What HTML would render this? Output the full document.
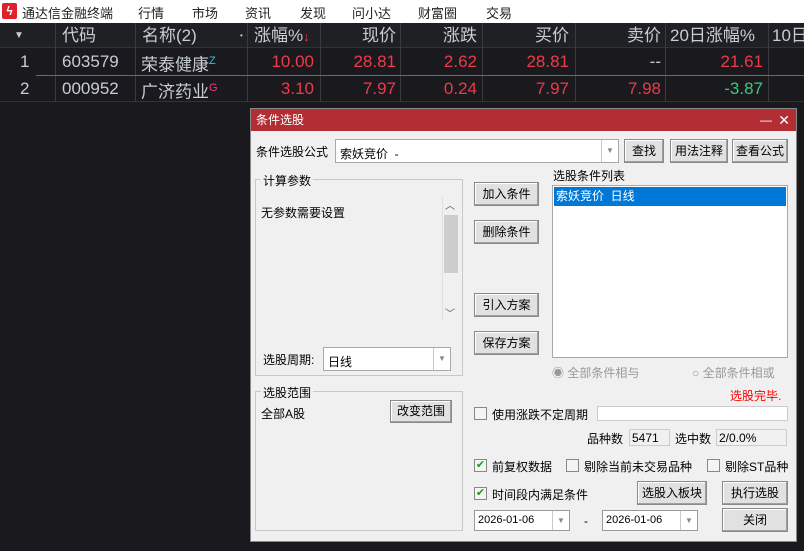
<!DOCTYPE html>
<html><head><meta charset="utf-8"><style>
*{margin:0;padding:0;box-sizing:border-box}
body{width:804px;height:551px;background:#1a1a1e;overflow:hidden;position:relative;font-family:"Liberation Sans","Noto Sans CJK SC",sans-serif}
.a{position:absolute;white-space:nowrap}
.menu{left:0;top:0;width:804px;height:23px;background:#fff;font-size:13px;color:#222}
.hdr{left:0;top:23px;width:804px;height:25px;background:#1f2024;border-bottom:1px solid #333}
.t{font-size:17px;color:#c8ccd4;line-height:25px}
.r{color:#f0384a}
.vl{position:absolute;width:1px;background:#3a3b40;top:23px;height:78px}
.dlg{left:250px;top:108px;width:547px;height:434px;background:#f0f0f0;border:1px solid #888}
.tb{left:0;top:0;width:545px;height:22px;background:#b32d34;color:#fff;font-size:12px;line-height:22px;padding-left:5px}
.d{font-size:12px;color:#000}
.btn{position:absolute;background:#e1e1e1;border:1px solid #8a8a8a;box-shadow:inset -1px -1px #a0a0a0,inset 1px 1px #fff;font-size:12px;text-align:center;color:#000}
.box{position:absolute;background:#fff;border:1px solid #a8a8a8}
.grp{position:absolute;border:1px solid #c8c8c8}
.gl{position:absolute;top:-8px;left:5px;background:#f0f0f0;padding:0 2px;font-size:12px}
.cb{position:absolute;width:13px;height:13px;border:1px solid #888;background:#f4f4f4;font-size:11px;color:#1a9a1a;line-height:11px;text-align:center}
.dd{position:absolute;right:0;top:0;bottom:0;width:17px;border-left:1px solid #c8c8c8;color:#888;font-size:8px;text-align:center}
</style></head><body>
<div class="a menu">
<div class="a" style="left:2px;top:3px;width:15px;height:16px;background:#e0202a;border-radius:2px;color:#fff;font-size:12px;line-height:16px;text-align:center;font-weight:bold">ϟ</div>
<div class="a" style="left:22px;top:3px">通达信金融终端</div>
<div class="a" style="left:138px;top:3px">行情</div>
<div class="a" style="left:192px;top:3px">市场</div>
<div class="a" style="left:245px;top:3px">资讯</div>
<div class="a" style="left:300px;top:3px">发现</div>
<div class="a" style="left:352px;top:3px">问小达</div>
<div class="a" style="left:418px;top:3px">财富圈</div>
<div class="a" style="left:486px;top:3px">交易</div>
</div>
<div class="a hdr"></div>
<div class="vl" style="left:55px"></div><div class="vl" style="left:135px"></div><div class="vl" style="left:247px"></div><div class="vl" style="left:320px"></div><div class="vl" style="left:400px"></div><div class="vl" style="left:482px"></div><div class="vl" style="left:575px"></div><div class="vl" style="left:665px"></div><div class="vl" style="left:768px"></div>
<div class="a t" style="left:14px;top:23px;font-size:10px">▼</div>
<div class="a t" style="left:62px;top:23px">代码</div>
<div class="a t" style="left:142px;top:23px">名称(2)</div>
<div class="a t" style="left:240px;top:23px;font-size:8px">•</div>
<div class="a t" style="left:254px;top:23px">涨幅%<span class="r" style="font-size:13px">↓</span></div>
<div class="a t" style="left:320px;top:23px;width:76px;text-align:right">现价</div>
<div class="a t" style="left:400px;top:23px;width:77px;text-align:right">涨跌</div>
<div class="a t" style="left:482px;top:23px;width:87px;text-align:right">买价</div>
<div class="a t" style="left:575px;top:23px;width:86px;text-align:right">卖价</div>
<div class="a t" style="left:670px;top:23px">20日涨幅%</div>
<div class="a t" style="left:772px;top:23px">10日</div>
<div class="a" style="left:36px;top:75px;width:768px;height:1px;background:#4a6ad8"></div>
<div class="a" style="left:0;top:101px;width:804px;height:1px;background:#333"></div>
<div class="a t" style="left:20px;top:49px">1</div>
<div class="a t" style="left:62px;top:49px">603579</div>
<div class="a t" style="left:141px;top:49px">荣泰健康<sup style="color:#20d0e0;font-size:11px">Z</sup></div>
<div class="a t r" style="left:247px;top:49px;width:67px;text-align:right">10.00</div>
<div class="a t r" style="left:320px;top:49px;width:76px;text-align:right">28.81</div>
<div class="a t r" style="left:400px;top:49px;width:77px;text-align:right">2.62</div>
<div class="a t r" style="left:482px;top:49px;width:87px;text-align:right">28.81</div>
<div class="a t" style="left:575px;top:49px;width:86px;text-align:right">--</div>
<div class="a t r" style="left:665px;top:49px;width:98px;text-align:right">21.61</div>
<div class="a t" style="left:20px;top:76px">2</div>
<div class="a t" style="left:62px;top:76px">000952</div>
<div class="a t" style="left:141px;top:76px">广济药业<sup style="color:#ff3090;font-size:11px">G</sup></div>
<div class="a t r" style="left:247px;top:76px;width:67px;text-align:right">3.10</div>
<div class="a t r" style="left:320px;top:76px;width:76px;text-align:right">7.97</div>
<div class="a t r" style="left:400px;top:76px;width:77px;text-align:right">0.24</div>
<div class="a t r" style="left:482px;top:76px;width:87px;text-align:right">7.97</div>
<div class="a t r" style="left:575px;top:76px;width:86px;text-align:right">7.98</div>
<div class="a t" style="left:665px;top:76px;width:98px;text-align:right;color:#3cc87a">-3.87</div>

<div class="a dlg">
<div class="a tb">条件选股<span style="position:absolute;right:24px;top:0">—</span><span style="position:absolute;right:6px;top:0;font-size:14px">✕</span></div>
<div class="a d" style="left:5px;top:34px">条件选股公式</div>
<div class="box" style="left:84px;top:30px;width:284px;height:24px"><span class="a d" style="left:4px;top:5px">索妖竞价&nbsp; -</span><div class="dd" style="line-height:22px">▼</div></div>
<div class="btn" style="left:373px;top:30px;width:40px;height:24px;line-height:22px">查找</div>
<div class="btn" style="left:419px;top:30px;width:58px;height:24px;line-height:22px">用法注释</div>
<div class="btn" style="left:481px;top:30px;width:56px;height:24px;line-height:22px">查看公式</div>

<div class="grp" style="left:4px;top:70px;width:208px;height:197px"><div class="gl">计算参数</div>
<div class="a d" style="left:5px;top:24px">无参数需要设置</div>
<div class="a" style="left:186px;top:17px;width:16px;height:123px;background:#f0f0f0;border-left:1px solid #e0e0e0">
<div class="a" style="left:2px;top:0;font-size:10px;color:#555">︿</div>
<div class="a" style="left:1px;top:18px;width:14px;height:58px;background:#cdcdcd"></div>
<div class="a" style="left:2px;top:108px;font-size:10px;color:#555">﹀</div></div>
<div class="a d" style="left:7px;top:171px">选股周期:</div>
<div class="box" style="left:67px;top:167px;width:128px;height:24px"><span class="a d" style="left:4px;top:5px">日线</span><div class="dd" style="line-height:22px">▼</div></div>
</div>

<div class="btn" style="left:223px;top:73px;width:65px;height:24px;line-height:22px">加入条件</div>
<div class="btn" style="left:223px;top:111px;width:65px;height:24px;line-height:22px">删除条件</div>
<div class="btn" style="left:223px;top:184px;width:65px;height:24px;line-height:22px">引入方案</div>
<div class="btn" style="left:223px;top:222px;width:65px;height:24px;line-height:22px">保存方案</div>

<div class="a d" style="left:302px;top:58px">选股条件列表</div>
<div class="box" style="left:301px;top:76px;width:236px;height:173px"><div class="a" style="left:1px;top:1px;width:232px;height:19px;background:#0078d7;color:#fff;font-size:12px;line-height:19px;padding-left:2px">索妖竞价&nbsp; 日线</div></div>
<div class="a d" style="left:301px;top:255px;color:#999">◉ 全部条件相与</div>
<div class="a d" style="left:441px;top:255px;color:#999">○ 全部条件相或</div>
<div class="a d" style="left:479px;top:278px;color:#f00">选股完毕.</div>

<div class="grp" style="left:4px;top:282px;width:208px;height:140px"><div class="gl">选股范围</div>
<div class="a d" style="left:5px;top:13px">全部A股</div>
<div class="btn" style="left:134px;top:8px;width:62px;height:23px;line-height:21px">改变范围</div></div>

<div class="cb" style="left:223px;top:298px"></div><div class="a d" style="left:241px;top:297px">使用涨跌不定周期</div>
<div class="box" style="left:346px;top:297px;width:191px;height:15px;border-color:#ccc"></div>
<div class="a d" style="left:336px;top:321px">品种数</div>
<div class="box" style="left:378px;top:320px;width:41px;height:17px;background:#f0f0f0;border-color:#ccc"><span class="a d" style="left:2px;top:1px">5471</span></div>
<div class="a d" style="left:424px;top:321px">选中数</div>
<div class="box" style="left:465px;top:320px;width:71px;height:17px;background:#f0f0f0;border-color:#ccc"><span class="a d" style="left:2px;top:1px">2/0.0%</span></div>
<div class="cb" style="left:223px;top:350px">✔</div><div class="a d" style="left:241px;top:349px">前复权数据</div>
<div class="cb" style="left:315px;top:350px"></div><div class="a d" style="left:333px;top:349px">剔除当前未交易品种</div>
<div class="cb" style="left:456px;top:350px"></div><div class="a d" style="left:474px;top:349px">剔除ST品种</div>
<div class="cb" style="left:223px;top:378px">✔</div><div class="a d" style="left:241px;top:377px">时间段内满足条件</div>
<div class="btn" style="left:386px;top:372px;width:70px;height:24px;line-height:22px">选股入板块</div>
<div class="btn" style="left:471px;top:372px;width:66px;height:24px;line-height:22px">执行选股</div>
<div class="btn" style="left:471px;top:399px;width:66px;height:24px;line-height:22px">关闭</div>
<div class="box" style="left:223px;top:401px;width:96px;height:21px;border-color:#999"><span class="a d" style="left:3px;top:3px;font-size:11px">2026-01-06</span><div class="dd" style="line-height:19px">▼</div></div>
<div class="a d" style="left:333px;top:405px">-</div>
<div class="box" style="left:351px;top:401px;width:96px;height:21px;border-color:#999"><span class="a d" style="left:3px;top:3px;font-size:11px">2026-01-06</span><div class="dd" style="line-height:19px">▼</div></div>
</div>
</body></html>
